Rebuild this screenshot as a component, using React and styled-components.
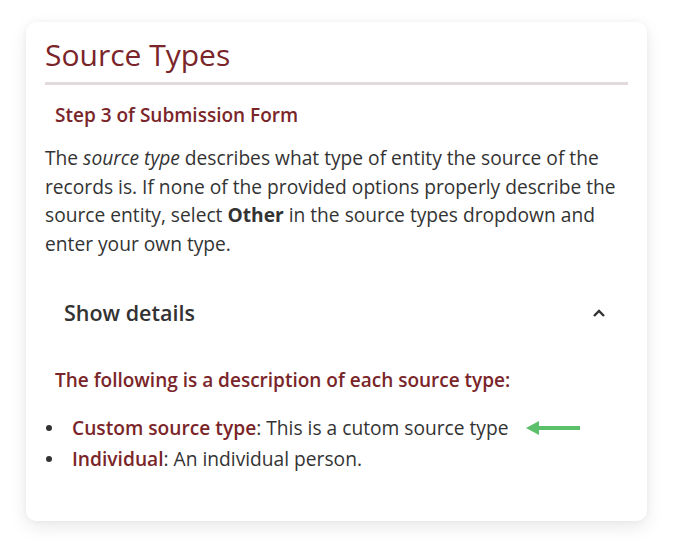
import React from "react";
import styled, { createGlobalStyle } from "styled-components";

const Global = createGlobalStyle`
  html, body { margin: 0; padding: 0; background: #fff; }
  body { font-family: "Open Sans", "Noto Sans", sans-serif; color: #333; }
`;

const Page = styled.div`
  padding: 22px 33px 24px 26px;
`;

const Card = styled.section`
  background: #fff;
  border-radius: 10px;
  box-shadow: 0 6px 18px rgba(0, 0, 0, 0.09), 0 0 6px rgba(0, 0, 0, 0.04);
  padding: 13px 19px 47px 19px;
`;

const Title = styled.h2`
  margin: 0;
  font-size: 30px;
  font-weight: 400;
  line-height: 40px;
  color: #7a2529;
  padding-bottom: 7px;
  border-bottom: 3px solid #e3dadb;
`;

const Step = styled.h3`
  margin: 16px 0 0 10px;
  font-size: 19px;
  font-weight: 600;
  line-height: 28px;
  color: #7a2529;
`;

const Para = styled.p`
  margin: 15px 0 0;
  font-size: 19.2px;
  line-height: 28.5px;
  color: #333;
  em { font-style: italic; }
  strong { font-weight: 700; }
`;

const Details = styled.div`
  margin-top: 40px;
`;

const Summary = styled.div`
  display: flex;
  align-items: center;
  justify-content: space-between;
  padding: 0 22px 0 19px;
  font-size: 21.5px;
  font-weight: 600;
  color: #333;
  line-height: 30px;
`;

const Lead = styled.h4`
  margin: 38px 0 0 10px;
  font-size: 19px;
  font-weight: 600;
  line-height: 28px;
  color: #7a2529;
`;

const List = styled.ul`
  margin: 18px 0 0;
  padding: 0;
  list-style: none;
  font-size: 19.2px;
  line-height: 31px;
  color: #333;
`;

const Item = styled.li`
  display: flex;
  align-items: center;
`;

const Bullet = styled.span`
  flex: none;
  width: 27px;
  display: flex;
  align-items: center;
  &::before {
    content: "";
    width: 6px;
    height: 6px;
    margin-left: 1px;
    border-radius: 50%;
    background: #333;
  }
`;

const Term = styled.span`
  font-weight: 600;
  color: #7a2529;
`;

const Arrow = styled.svg`
  flex: none;
  margin-left: 17px;
`;

export default function App() {
  return (
    <>
      <Global />
      <Page>
        <Card>
          <Title>Source Types</Title>
          <Step>Step 3 of Submission Form</Step>
          <Para>
            The <em>source type</em> describes what type of entity the source of the
            records is. If none of the provided options properly describe the source
            entity, select <strong>Other</strong> in the source types dropdown and
            enter your own type.
          </Para>
          <Details>
            <Summary>
              <span>Show details</span>
              <svg width="14" height="10" viewBox="0 0 14 10">
                <path d="M2 8 L7 3 L12 8" fill="none" stroke="#333" strokeWidth="2.4" />
              </svg>
            </Summary>
            <Lead>The following is a description of each source type:</Lead>
            <List>
              <Item>
                <Bullet />
                <span>
                  <Term>Custom source type</Term>: This is a cutom source type
                </span>
                <Arrow width="56" height="16" viewBox="0 0 56 16">
                  <path d="M14 8 H55" stroke="#5cbf6a" strokeWidth="4" />
                  <path d="M1 8 L14 1 L14 15 Z" fill="#5cbf6a" />
                </Arrow>
              </Item>
              <Item>
                <Bullet />
                <span>
                  <Term>Individual</Term>: An individual person.
                </span>
              </Item>
            </List>
          </Details>
        </Card>
      </Page>
    </>
  );
}
